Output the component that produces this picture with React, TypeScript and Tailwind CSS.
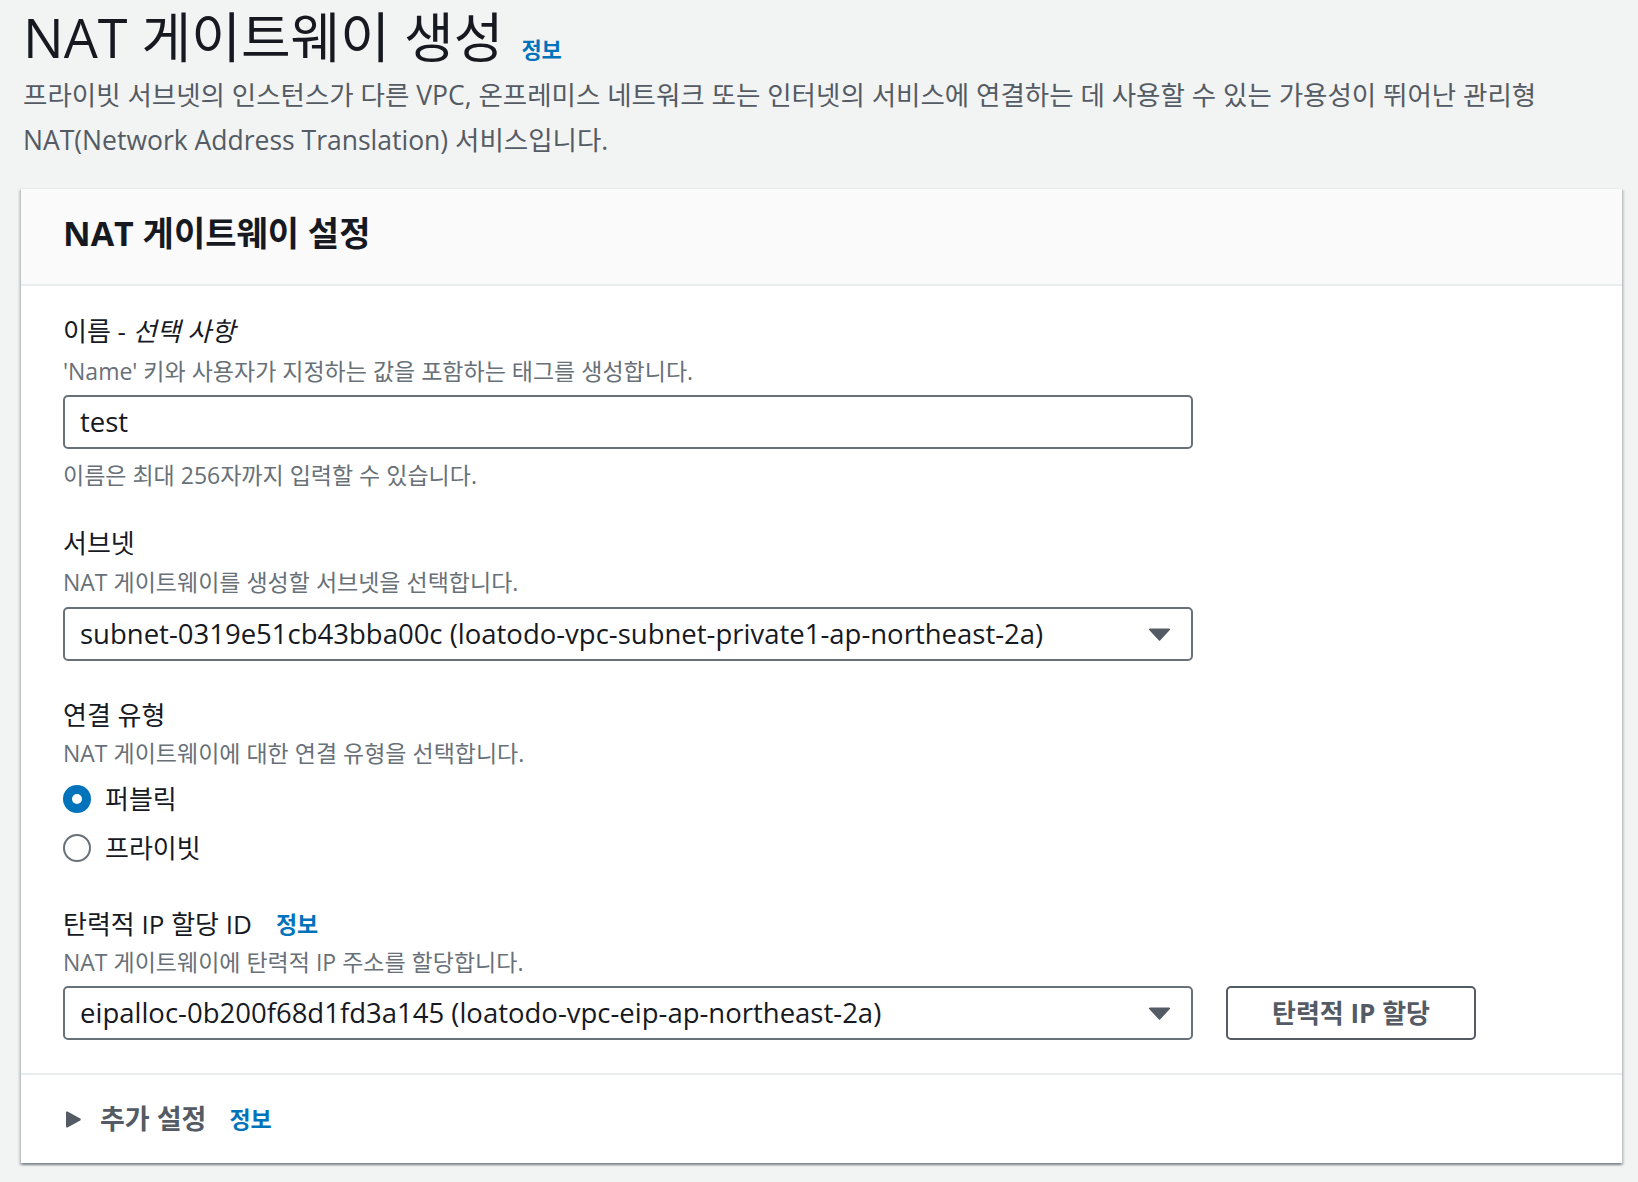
import React from 'react';

const Caret = () => (
  <svg width="21" height="13" viewBox="0 0 21 13" className="shrink-0">
    <path d="M1 0.5 H20 a1 1 0 0 1 0.8 1.6 L11.3 12.3 a1 1 0 0 1 -1.6 0 L0.2 2.1 A1 1 0 0 1 1 0.5 Z" fill="#545b64" />
  </svg>
);

const Info = ({ className = '' }: { className?: string }) => (
  <span className={`font-bold text-[#0073bb] ${className}`}>정보</span>
);

const Label: React.FC<{ children: React.ReactNode; className?: string }> = ({ children, className = '' }) => (
  <div className={`text-[26px] leading-[36px] text-[#16191f] ${className}`}>{children}</div>
);

const Desc: React.FC<{ children: React.ReactNode; className?: string }> = ({ children, className = '' }) => (
  <div className={`text-[23px] leading-[32px] text-[#687078] ${className}`}>{children}</div>
);

const SelectBox = ({ value }: { value: string }) => (
  <div className="flex h-[54px] w-[1130px] items-center justify-between rounded-[5px] border-2 border-[#687078] bg-white pl-[15px] pr-[21px]">
    <span className="text-[27.5px] text-[#16191f]">{value}</span>
    <Caret />
  </div>
);

const Radio = ({ checked, label }: { checked: boolean; label: string }) => (
  <div className="flex h-[40px] items-center">
    {checked ? (
      <span className="flex h-[28px] w-[28px] items-center justify-center rounded-full bg-[#0073bb]">
        <span className="h-[10px] w-[10px] rounded-full bg-white" />
      </span>
    ) : (
      <span className="h-[28px] w-[28px] rounded-full border-2 border-[#687078] bg-white" />
    )}
    <span className="ml-[14px] text-[26px] text-[#16191f]">{label}</span>
  </div>
);

export default function App() {
  return (
    <div className="min-h-[1182px] bg-[#f2f3f3] pl-[21px] pr-[16px] pt-[6px] font-['Open_Sans','Noto_Sans_CJK_KR',sans-serif]">
      {/* Page header */}
      <div className="ml-[2px] flex items-baseline">
        <h1 className="text-[54px] leading-[62px] text-[#16191f]">NAT 게이트웨이 생성</h1>
        <Info className="ml-[18px] text-[22px]" />
      </div>
      <p className="ml-[2px] mt-[5px] text-[26.5px] leading-[45px] text-[#545b64]">
        프라이빗 서브넷의 인스턴스가 다른 VPC, 온프레미스 네트워크 또는 인터넷의 서비스에 연결하는 데 사용할 수 있는 가용성이 뛰어난 관리형
        <br />
        NAT(Network Address Translation) 서비스입니다.
      </p>

      {/* Settings card */}
      <div className="mt-[25px] border-t border-[#eaeded] bg-white shadow-[0_2px_2px_0_rgba(0,28,36,0.3),2px_2px_2px_0_rgba(0,28,36,0.15),-2px_2px_2px_0_rgba(0,28,36,0.15)]">
        <div className="border-b-2 border-[#eaeded] bg-[#fafafa] px-[42px] pb-[30px] pt-[24px]">
          <h2 className="text-[34px] font-bold leading-[41px] text-[#16191f]">NAT 게이트웨이 설정</h2>
        </div>

        <div className="px-[42px] pb-[33px] pt-[27px]">
          {/* Name */}
          <Label>
            이름 - <i>선택 사항</i>
          </Label>
          <Desc className="mt-[6px]">'Name' 키와 사용자가 지정하는 값을 포함하는 태그를 생성합니다.</Desc>
          <div className="mt-[8px] flex h-[54px] w-[1130px] items-center rounded-[5px] border-2 border-[#687078] bg-white pl-[15px]">
            <span className="text-[27.5px] text-[#16191f]">test</span>
          </div>
          <Desc className="mt-[10px]">이름은 최대 256자까지 입력할 수 있습니다.</Desc>

          {/* Subnet */}
          <Label className="mt-[34px]">서브넷</Label>
          <Desc className="mt-[5px]">NAT 게이트웨이를 생성할 서브넷을 선택합니다.</Desc>
          <div className="mt-[9px]">
            <SelectBox value="subnet-0319e51cb43bba00c (loatodo-vpc-subnet-private1-ap-northeast-2a)" />
          </div>

          {/* Connectivity type */}
          <Label className="mt-[36px]">연결 유형</Label>
          <Desc className="mt-[4px]">NAT 게이트웨이에 대한 연결 유형을 선택합니다.</Desc>
          <div className="mt-[10px] flex flex-col gap-[9px]">
            <Radio checked label="퍼블릭" />
            <Radio checked={false} label="프라이빗" />
          </div>

          {/* Elastic IP */}
          <Label className="mt-[38px] flex items-center">
            탄력적 IP 할당 ID
            <Info className="ml-[24px] text-[23px]" />
          </Label>
          <Desc className="mt-[4px]">NAT 게이트웨이에 탄력적 IP 주소를 할당합니다.</Desc>
          <div className="mt-[8px] flex items-center gap-[33px]">
            <SelectBox value="eipalloc-0b200f68d1fd3a145 (loatodo-vpc-eip-ap-northeast-2a)" />
            <button className="h-[54px] w-[250px] rounded-[5px] border-2 border-[#545b64] bg-white text-[26px] font-bold text-[#545b64]">
              탄력적 IP 할당
            </button>
          </div>
        </div>

        {/* Additional settings */}
        <div className="flex h-[90px] items-center border-t-2 border-[#eaeded] pl-[45px]">
          <svg width="15" height="17" viewBox="0 0 15 17">
            <path d="M1.5 0.6 L14.2 7.6 a1 1 0 0 1 0 1.8 L1.5 16.4 A1 1 0 0 1 0 15.5 V1.5 A1 1 0 0 1 1.5 0.6 Z" fill="#545b64" />
          </svg>
          <span className="ml-[19px] text-[27px] font-bold text-[#545b64]">추가 설정</span>
          <Info className="ml-[23px] text-[23px]" />
        </div>
      </div>
    </div>
  );
}
